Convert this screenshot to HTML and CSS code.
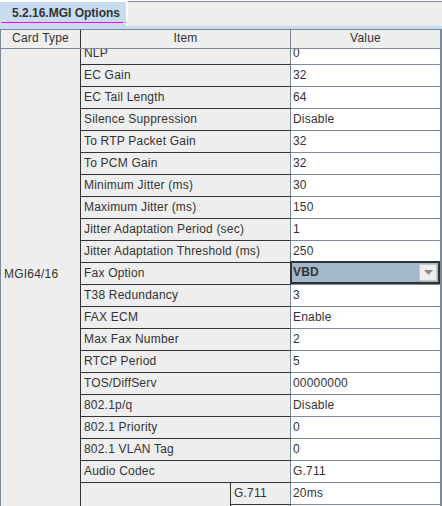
FILE: index.html
```html
<!DOCTYPE html>
<html>
<head>
<meta charset="utf-8">
<link rel="stylesheet" href="styles.css">
</head>
<body>
<div class="tabbar">
  <div class="tab"><span class="tab-label">5.2.16.MGI Options</span></div>
  <div class="tab-fill"></div>
</div>
<div class="strip"></div>
<div class="table">
  <div class="thead">
    <div class="th c1">Card Type</div>
    <div class="th c2">Item</div>
    <div class="th c3">Value</div>
  </div>
  <div class="tbody">
    <div class="cardcol"><span class="card-label">MGI64/16</span></div>
    <div class="rows">
      <div class="row first"><div class="item">NLP</div><div class="value">0</div></div>
      <div class="row"><div class="item">EC Gain</div><div class="value">32</div></div>
      <div class="row"><div class="item">EC Tail Length</div><div class="value">64</div></div>
      <div class="row"><div class="item">Silence Suppression</div><div class="value">Disable</div></div>
      <div class="row"><div class="item">To RTP Packet Gain</div><div class="value">32</div></div>
      <div class="row"><div class="item">To PCM Gain</div><div class="value">32</div></div>
      <div class="row"><div class="item">Minimum Jitter (ms)</div><div class="value">30</div></div>
      <div class="row"><div class="item">Maximum Jitter (ms)</div><div class="value">150</div></div>
      <div class="row"><div class="item">Jitter Adaptation Period (sec)</div><div class="value">1</div></div>
      <div class="row"><div class="item">Jitter Adaptation Threshold (ms)</div><div class="value">250</div></div>
      <div class="row"><div class="item">Fax Option</div><div class="value combo-cell">
        <div class="combo"><span class="combo-text">VBD</span><span class="combo-btn"><svg width="9" height="5" viewBox="0 0 9 5"><polygon points="0,0 9,0 4.5,5" fill="#8a8a8a"/></svg></span></div>
      </div></div>
      <div class="row"><div class="item">T38 Redundancy</div><div class="value">3</div></div>
      <div class="row"><div class="item">FAX ECM</div><div class="value">Enable</div></div>
      <div class="row"><div class="item">Max Fax Number</div><div class="value">2</div></div>
      <div class="row"><div class="item">RTCP Period</div><div class="value">5</div></div>
      <div class="row"><div class="item">TOS/DiffServ</div><div class="value">00000000</div></div>
      <div class="row"><div class="item">802.1p/q</div><div class="value">Disable</div></div>
      <div class="row"><div class="item">802.1 Priority</div><div class="value">0</div></div>
      <div class="row"><div class="item">802.1 VLAN Tag</div><div class="value">0</div></div>
      <div class="row"><div class="item">Audio Codec</div><div class="value">G.711</div></div>
      <div class="subgroup">
        <div class="sub-blank"></div>
        <div class="sub-rows">
          <div class="row"><div class="item sub-name">G.711</div><div class="value">20ms</div></div>
          <div class="row"><div class="item sub-name"></div><div class="value"></div></div>
        </div>
      </div>
    </div>
  </div>
</div>
</body>
</html>
```
FILE: styles.css
```css
html, body {
  margin: 0;
  padding: 0;
  width: 442px;
  height: 506px;
  overflow: hidden;
  background: #ffffff;
  font-family: "Liberation Sans", Arial, sans-serif;
  font-size: 12px;
  color: #333333;
}

.tabbar {
  display: flex;
  height: 26px;
  background: #ffffff;
}

.tab {
  width: 126px;
  margin-top: 2px;
  background: #c8dcf0;
  box-sizing: border-box;
  padding: 4px 0 0 2px;
}

.tab-label {
  display: block;
  width: 121px;
  box-sizing: border-box;
  padding-left: 10px;
  height: 17px;
  font-weight: bold;
  line-height: 14px;
  border-bottom: 1px solid #ff00ff;
}

.tab-fill {
  flex: 1;
  margin-top: 1px;
  margin-left: 1px;
  border-top: 1px solid #7a8a99;
  border-left: 1px solid #ffffff;
  background: #eeeeee;
}

.strip {
  height: 3px;
  background: #c8dcf0;
}

.table {
  display: flex;
  flex-direction: column;
  height: 477px;
  border-top: 1px solid #7a8a99;
  box-sizing: border-box;
}

.thead {
  display: flex;
  height: 18px;
  border-bottom: 1px solid #7a8a99;
  background: #eeeeee;
}

.th {
  box-sizing: border-box;
  text-align: center;
  line-height: 17px;
  letter-spacing: 0.2px;
}

.c1 {
  width: 81px;
  border-left: 1px solid #7a8a99;
  border-right: 1px solid #333333;
}

.c2 {
  width: 210px;
  border-right: 1px solid #7a8a99;
}

.c3 {
  width: 151px;
  border-right: 2px solid #7a8a99;
}

.tbody {
  flex: 1;
  display: flex;
  overflow: hidden;
}

.cardcol {
  width: 81px;
  box-sizing: border-box;
  border-left: 1px solid #7a8a99;
  border-right: 1px solid #333333;
  background: #eeeeee;
  display: flex;
  align-items: center;
  padding: 0 0 8px 3px;
  letter-spacing: 0.2px;
}

.rows {
  width: 361px;
  display: flex;
  flex-direction: column;
}

.row {
  display: flex;
  height: 22px;
  flex-shrink: 0;
}

.row.first {
  margin-top: -6px;
}

.item {
  width: 210px;
  box-sizing: border-box;
  background: #eeeeee;
  border-right: 1px solid #7a8a99;
  border-bottom: 1px solid #333333;
  padding-left: 3px;
  line-height: 21px;
  letter-spacing: 0.2px;
  white-space: nowrap;
  overflow: hidden;
}

.value {
  width: 151px;
  box-sizing: border-box;
  background: #ffffff;
  border-right: 2px solid #7a8a99;
  border-bottom: 1px solid #7a8a99;
  padding-left: 2px;
  line-height: 21px;
  letter-spacing: 0.2px;
  white-space: nowrap;
  overflow: hidden;
}

.combo-cell {
  overflow: visible;
  padding: 0;
  position: relative;
}

.combo {
  position: absolute;
  left: -1px;
  top: -2px;
  width: 150px;
  height: 23px;
  box-sizing: border-box;
  border: 2px solid #333333;
  background: #a3b8cc;
  display: flex;
  align-items: center;
  justify-content: space-between;
}

.combo-text {
  font-weight: bold;
  padding-left: 1px;
  line-height: 19px;
}

.combo-btn {
  width: 18px;
  height: 17px;
  margin-right: 1px;
  background: #eeeeee;
  border: 1px solid #c8c8c8;
  box-sizing: border-box;
  display: flex;
  align-items: center;
  justify-content: center;
}

.subgroup {
  display: flex;
  flex: 1;
}

.sub-blank {
  width: 150px;
  box-sizing: border-box;
  background: #eeeeee;
  border-right: 1px solid #333333;
}

.sub-rows {
  width: 211px;
  display: flex;
  flex-direction: column;
}

.sub-name {
  width: 60px;
}
```
